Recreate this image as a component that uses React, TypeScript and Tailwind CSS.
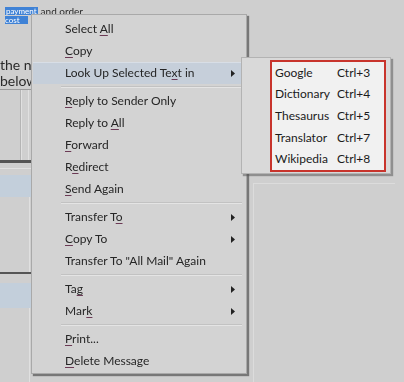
import type { ReactNode } from 'react';

type MenuRow = { label: ReactNode; arrow?: boolean; active?: boolean } | 'sep';

const K = ({ children }: { children: ReactNode }) => (
  <span className="underline decoration-[#6b3a55] underline-offset-2">{children}</span>
);

const rows: MenuRow[] = [
  { label: <>Select <K>A</K>ll</> },
  { label: <><K>C</K>opy</> },
  { label: <>Look Up Selected Te<K>x</K>t in</>, arrow: true, active: true },
  'sep',
  { label: <><K>R</K>eply to Sender Only</> },
  { label: <>Reply to <K>A</K>ll</> },
  { label: <><K>F</K>orward</> },
  { label: <>R<K>e</K>direct</> },
  { label: <><K>S</K>end Again</> },
  'sep',
  { label: <>Transfer T<K>o</K></>, arrow: true },
  { label: <><K>C</K>opy To</>, arrow: true },
  { label: <>Transfer To "All Mail" Again</> },
  'sep',
  { label: <>Ta<K>g</K></>, arrow: true },
  { label: <>Mar<K>k</K></>, arrow: true },
  'sep',
  { label: <><K>P</K>rint...</> },
  { label: <><K>D</K>elete Message</> },
];

const lookups = [
  ['Google', 'Ctrl+3'],
  ['Dictionary', 'Ctrl+4'],
  ['Thesaurus', 'Ctrl+5'],
  ['Translator', 'Ctrl+7'],
  ['Wikipedia', 'Ctrl+8'],
];

function Arrow() {
  return (
    <svg width="4" height="7" viewBox="0 0 4 7" className="shrink-0">
      <path d="M0 0 L4 3.5 L0 7 Z" fill="#222" />
    </svg>
  );
}

function Backdrop() {
  return (
    <div className="flex h-full text-[#2a2a2a]">
      {/* left strip of the message window */}
      <div className="flex w-[31px] shrink-0 flex-col">
        <div className="h-[6px]" />
        <div className="flex h-[9px] items-center whitespace-nowrap pl-[5px] text-[8px] leading-[8px]">
          <span className="bg-[#3f82d6] px-[1px] text-white">payment</span>
          <span className="pl-[3px] text-[10px]">and order</span>
        </div>
        <div className="flex h-[9px] items-center whitespace-nowrap pl-[5px] text-[8px] leading-[8px]">
          <span className="w-[23px] bg-[#3f82d6] text-white">cost</span>
        </div>
        <div className="h-[33px]" />
        <div className="whitespace-nowrap text-[14px] leading-[16px]">the n</div>
        <div className="whitespace-nowrap text-[14px] leading-[16px]">below</div>
        <div className="h-[1px] bg-[#9a9a9a]" />
        <div className="flex h-[70px]">
          <div className="w-[21px] border-r border-[#b4b4b4]" />
          <div className="w-[8px] border-l border-r border-[#e0e0e0]" />
        </div>
        <div className="h-[3px] bg-[#555]" />
        <div className="h-[5px]" />
        <div className="h-[1px] bg-[#e2e2e2]" />
        <div className="h-[6px]" />
        <div className="h-[22px] bg-[#c3cfdb]" />
        <div className="flex h-[75px] justify-end">
          <div className="w-[2px] border-l border-[#e0e0e0]" />
        </div>
        <div className="h-[2px] bg-[#555]" />
        <div className="h-[9px]" />
        <div className="h-[25px] bg-[#c3cfdb]" />
        <div className="flex flex-1 justify-end">
          <div className="w-[2px] border-l border-[#e0e0e0]" />
        </div>
      </div>
      {/* right side of the window, behind the menus */}
      <div className="flex flex-1 flex-col">
        <div className="h-[183px]" />
        <div className="ml-[222px] mr-[9px] flex-1 border-l border-t border-[#dcdcdc]" />
      </div>
    </div>
  );
}

export default function App() {
  return (
    <div className="relative h-[382px] w-[404px] overflow-hidden bg-[#cfcfcf] font-['Lato','Noto_Sans',sans-serif]">
      <div className="absolute inset-0 blur-[0.7px]">
        <Backdrop />

        {/* main context menu */}
        <div className="absolute left-[31px] top-[14px] flex w-[216px] flex-col border border-[#a9a9a9] bg-[#d3d3d3] pb-[1px] pt-[3px] text-[12px] text-[#262626] shadow-[2px_2px_1px_rgba(60,60,60,0.6)]">
          {rows.map((r, i) =>
            r === 'sep' ? (
              <div key={i} className="flex h-[6px] items-center pl-[29px] pr-[4px]">
                <div className="h-[2px] flex-1 border-t border-b border-t-[#c2c2c2] border-b-[#e4e4e4]" />
              </div>
            ) : (
              <div
                key={i}
                className={`mx-[1px] flex h-[22px] items-center pl-[32px] pr-[10px] ${
                  r.active ? 'bg-[#c6cfda] shadow-[inset_0_1px_0_#d8dee6]' : ''
                }`}
              >
                <span className="flex-1 whitespace-nowrap">{r.label}</span>
                {r.arrow && <Arrow />}
              </div>
            )
          )}
        </div>
      </div>

      {/* "Look Up Selected Text in" submenu, not blurred */}
      <div className="absolute left-[241px] top-[57px] h-[117px] w-[150px] border border-[#b3b3b3] bg-[#d9d9d9] shadow-[2px_2px_1px_rgba(80,80,80,0.5)]">
        <div className="ml-[28px] mt-[2px] w-[116px] border-2 border-[#c8342c] bg-[#f1f1f1] text-[12px] text-[#1b1b1b]">
          {lookups.map(([name, key]) => (
            <div key={name} className="grid h-[21.6px] grid-cols-[62px_auto] items-center pl-[3px]">
              <span>{name}</span>
              <span>{key}</span>
            </div>
          ))}
        </div>
      </div>
    </div>
  );
}
